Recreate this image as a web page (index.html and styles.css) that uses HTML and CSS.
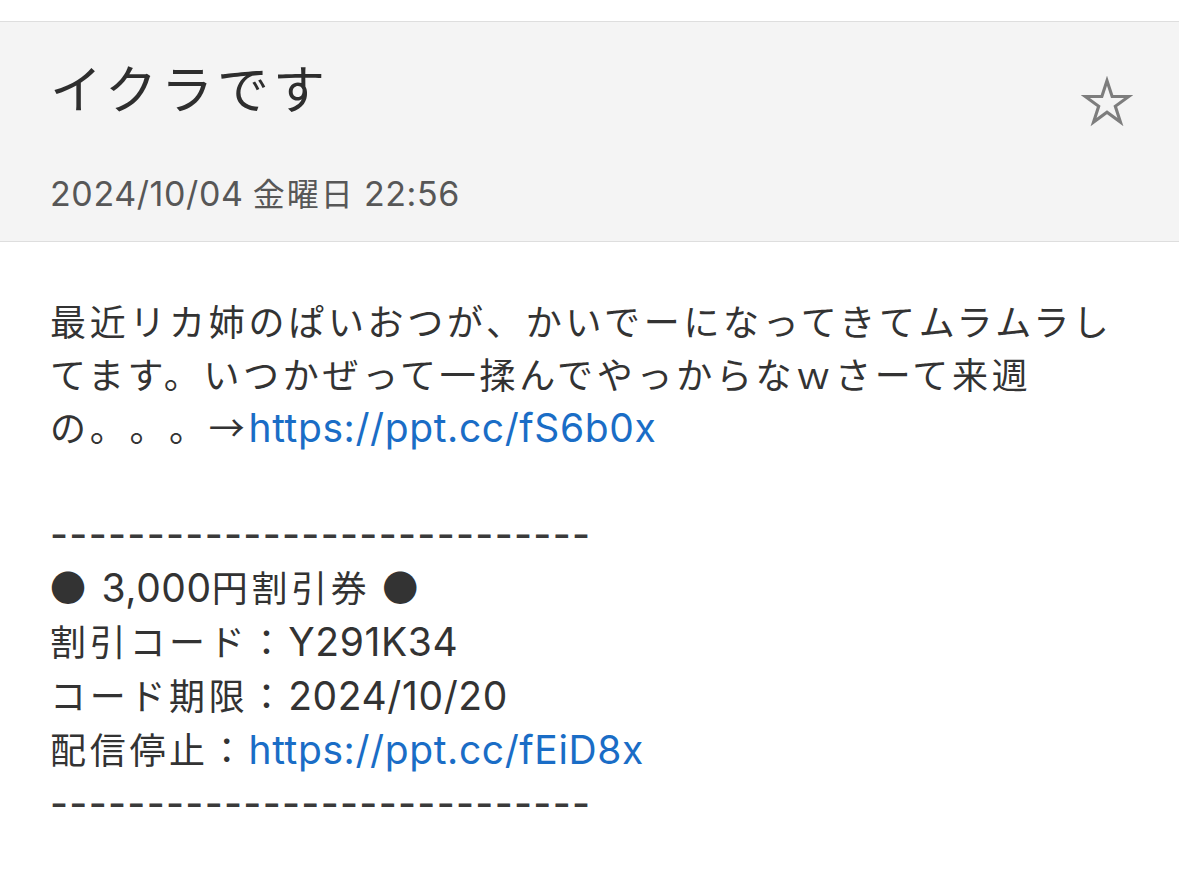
FILE: index.html
```html
<!DOCTYPE html>
<html lang="ja">
<head>
<meta charset="utf-8">
<title>イクラです</title>
<link rel="stylesheet" href="styles.css">
</head>
<body>
<div class="page">
  <div class="topgap"></div>
  <header class="header">
    <div class="hleft">
      <h1 class="title">イクラです</h1>
      <div class="date"><span class="lat">2024/10/04</span> 金曜日 <span class="lat">22:56</span></div>
    </div>
    <svg class="star" viewBox="0 0 50 50" aria-hidden="true">
      <polygon points="25,4.5 29.94,19.7 45.92,19.7 32.99,29.1 37.94,44.3 25,34.9 12.06,44.3 17.01,29.1 4.08,19.7 20.06,19.7"/>
    </svg>
  </header>
  <main class="body">
    <p class="para">最近リカ姉のぱいおつが、かいでーになってきてムラムラしてます。いつかぜって一揉んでやっからなｗさーて来週の。。。→<a class="link lat" href="#">https://ppt.cc/fS6b0x</a></p>
    <div class="line blank">&nbsp;</div>
    <div class="line dash lat">----------------------------</div>
    <div class="line">● <span class="lat">3,000</span>円割引券 ●</div>
    <div class="line">割引コード：<span class="lat">Y291K34</span></div>
    <div class="line">コード期限：<span class="lat">2024/10/20</span></div>
    <div class="line">配信停止：<a class="link lat" href="#">https://ppt.cc/fEiD8x</a></div>
    <div class="line dash lat">----------------------------</div>
  </main>
</div>
</body>
</html>
```

FILE: styles.css
```css
html, body {
  margin: 0;
  padding: 0;
  background: #ffffff;
}

body {
  font-family: "Inter", "Noto Sans CJK JP", sans-serif;
  color: #333333;
  text-spacing-trim: space-all;
}

.page {
  width: 1179px;
  min-height: 877px;
  overflow: hidden;
}

.topgap {
  height: 21px;
  background: #ffffff;
}

.header {
  display: flex;
  justify-content: space-between;
  align-items: flex-start;
  background: #f4f4f4;
  border-top: 1px solid #dedede;
  border-bottom: 1px solid #dedede;
  padding: 33px 46px 25px 50px;
}

.hleft {
  display: flex;
  flex-direction: column;
  gap: 51px;
}

.title {
  margin: 0;
  font-family: "Noto Sans CJK JP", sans-serif;
  font-weight: 400;
  font-size: 52px;
  line-height: 64px;
  letter-spacing: 4px;
  color: #2e2e2e;
}

.date {
  font-family: "Noto Sans CJK JP", sans-serif;
  font-size: 32px;
  line-height: 44px;
  letter-spacing: 2px;
  color: #575757;
}

.date .lat {
  font-family: "Inter", sans-serif;
  font-size: 34px;
  letter-spacing: 0.6px;
}

.star {
  width: 52px;
  height: 52px;
  margin-top: 21px;
  flex: none;
}

.star polygon {
  fill: none;
  stroke: #7d7d7d;
  stroke-width: 3;
  stroke-linejoin: miter;
}

.body {
  padding: 52px 50px 40px 50px;
  font-family: "Noto Sans CJK JP", sans-serif;
  font-size: 36px;
  line-height: 53px;
  letter-spacing: 3.7px;
  color: #333333;
}

.para {
  margin: 0;
}

.line {
  white-space: nowrap;
}

.lat {
  font-family: "Inter", sans-serif;
  font-size: 39px;
  letter-spacing: 0.6px;
}

.link {
  color: #1a6dc6;
  text-decoration: none;
}

.dash {
  letter-spacing: 1.3px;
  font-weight: 500;
  color: #3a3a3a;
}
```
